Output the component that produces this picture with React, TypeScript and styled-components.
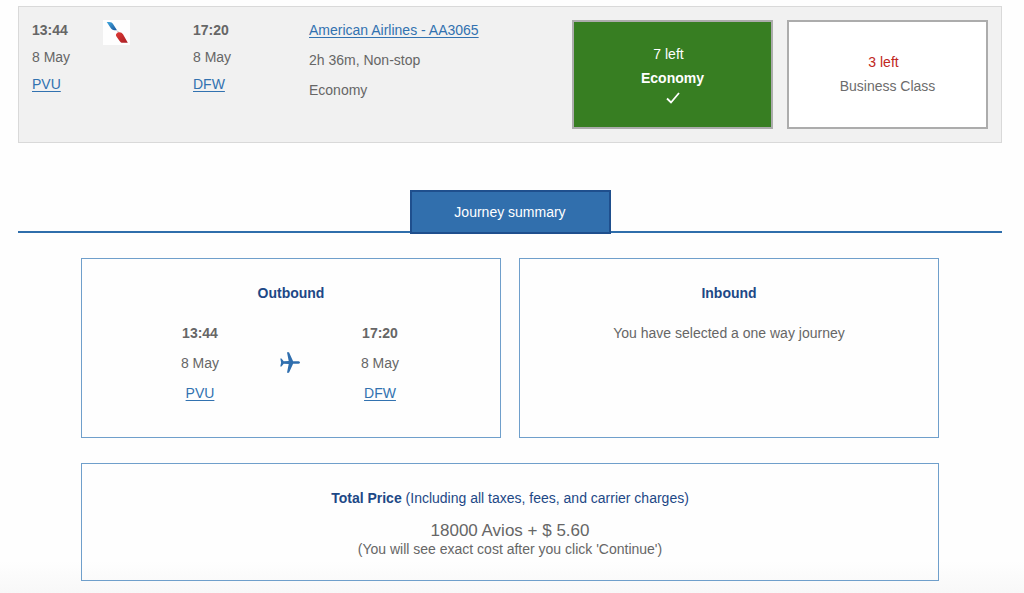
import React, { useState } from "react";
import styled, { createGlobalStyle } from "styled-components";

const GlobalStyle = createGlobalStyle`
  * { box-sizing: border-box; }
  body {
    margin: 0;
    min-height: 100vh;
    background: linear-gradient(to top, #f8f8f8, #fefefe 32px);
    color: #666;
    font-family: "Liberation Sans", Arial, Helvetica, sans-serif;
    font-size: 14px;
    line-height: 18px;
  }
  h2, h3, p { margin: 0; font-size: inherit; font-weight: inherit; }
`;

const Page = styled.main`
  padding: 6px 22px 12px 18px;
`;

const FlightRow = styled.section`
  display: grid;
  grid-template-columns: 71fr 90fr 116fr 263fr 416fr;
  padding: 13px;
  border: 1px solid #d9d9d9;
  background: #f1f1f1;
`;

const Stack = styled.div<{ $gap: number; $center?: boolean }>`
  display: flex;
  flex-direction: column;
  align-items: ${(p) => (p.$center ? "center" : "flex-start")};
  gap: ${(p) => p.$gap}px;
  padding-top: 1px;
`;

const Time = styled.strong`
  font-weight: 700;
`;

const TextLink = styled.a`
  color: #3272b0;
  text-decoration: underline;
  text-underline-offset: 2px;
`;

const AirlineLogo = styled.svg`
  display: block;
  width: 27px;
  height: 25px;
`;

const Cabins = styled.div`
  display: grid;
  grid-template-columns: 1fr 1fr;
  gap: 14px;
`;

const CabinButton = styled.button<{ $selected: boolean }>`
  display: flex;
  flex-direction: column;
  align-items: center;
  justify-content: center;
  gap: 6px;
  height: 109px;
  padding: 0 0 1px;
  border: 2px solid #acacac;
  background: ${(p) => (p.$selected ? "#377e22" : "#fff")};
  color: ${(p) => (p.$selected ? "#fff" : "#6c6c6c")};
  font: inherit;
  font-weight: ${(p) => (p.$selected ? 700 : 400)};
  cursor: pointer;
`;

const SeatsLeft = styled.span<{ $low: boolean }>`
  padding-right: 8px;
  color: ${(p) => (p.$low ? "#c0271d" : "inherit")};
  font-weight: 400;
`;

const CheckMark = styled.svg`
  display: block;
  width: 14px;
  height: 10px;
  overflow: visible;
`;

const TabBar = styled.header`
  display: flex;
  justify-content: center;
  margin-top: 47px;
  border-bottom: 2px solid #2f6eab;
`;

const Tab = styled.h2`
  width: 201px;
  margin-bottom: -3px;
  padding: 11px 0;
  border: 2px solid #1f4f8d;
  background: #316fad;
  color: #fff;
  text-align: center;
`;

const Summary = styled.div`
  display: grid;
  grid-template-columns: 1fr 1fr;
  gap: 25px 18px;
  padding: 25px 63px 0;
`;

const Panel = styled.section<{ $wide?: boolean }>`
  grid-column: ${(p) => (p.$wide ? "1 / -1" : "auto")};
  min-height: ${(p) => (p.$wide ? 118 : 180)}px;
  padding: 25px 20px 22px;
  border: 1px solid #6f9fcb;
  text-align: center;
`;

const PanelTitle = styled.h3`
  color: #1d4886;
`;

const Journey = styled.div`
  display: grid;
  grid-template-columns: 1fr 20px 1fr;
  gap: 42px;
  padding: 21px 42px 0 40px;
`;

const JourneyEnd = styled(Stack)<{ $side: "start" | "end" }>`
  justify-self: ${(p) => p.$side};
  width: 76px;
`;

const PlaneIcon = styled.svg`
  align-self: center;
  width: 20px;
  height: 22px;
`;

const Message = styled.p`
  padding-top: 22px;
`;

const Price = styled.p`
  padding-top: 15px;
  font-size: 17px;
`;

const cabins = [
  { name: "Economy", seats: 7 },
  { name: "Business Class", seats: 3 },
];

function Airline() {
  return (
    <AirlineLogo viewBox="0 0 27 25" role="img" aria-label="American Airlines">
      <defs>
        <linearGradient id="aaBlue" x1="0" y1="0" x2="1" y2="1">
          <stop offset="0" stopColor="#41a9df" />
          <stop offset="1" stopColor="#1b579d" />
        </linearGradient>
        <linearGradient id="aaRed" x1="0" y1="0" x2="1" y2="1">
          <stop offset="0" stopColor="#de3a35" />
          <stop offset="1" stopColor="#a91e25" />
        </linearGradient>
      </defs>
      <rect width="27" height="25" fill="#fefefe" />
      <path d="M3.700 2H6.200c2 0 3 .8 4 2.300L14 10.200h-2.500c-2 0-3-.9-4-2.500Z" fill="url(#aaBlue)" />
      <path d="M15 12.200h1.500c1.600 0 2.500.7 3.500 2.100l4.800 8.500h-5c-1.500 0-2.300-.5-3.200-1.800l-3-4.300c-.9-1.400-.9-2.100 0-3.100Z" fill="url(#aaRed)" />
      <path d="m13.700 11 .9.700 1.500.1-1.500-1.100Z" fill="#b5b9bf" />
    </AirlineLogo>
  );
}

export default function App() {
  const [cabin, setCabin] = useState("Economy");

  return (
    <>
      <GlobalStyle />
      <Page>
        <FlightRow>
          <Stack $gap={9}>
            <Time>13:44</Time>
            <span>8 May</span>
            <TextLink href="#pvu">PVU</TextLink>
          </Stack>
          <Airline />
          <Stack $gap={9}>
            <Time>17:20</Time>
            <span>8 May</span>
            <TextLink href="#dfw">DFW</TextLink>
          </Stack>
          <Stack $gap={12}>
            <TextLink href="#aa3065">American Airlines - AA3065</TextLink>
            <span>2h 36m, Non-stop</span>
            <span>Economy</span>
          </Stack>
          <Cabins>
            {cabins.map(({ name, seats }) => (
              <CabinButton
                key={name}
                type="button"
                $selected={cabin === name}
                aria-pressed={cabin === name}
                onClick={() => setCabin(name)}
              >
                <SeatsLeft $low={seats < 5}>{seats} left</SeatsLeft>
                <span>{name}</span>
                {cabin === name && (
                  <CheckMark viewBox="0 0 14 10" aria-hidden="true">
                    <path d="m1 5.500 4 4L13 0" fill="none" stroke="#fff" strokeWidth="1.800" />
                  </CheckMark>
                )}
              </CabinButton>
            ))}
          </Cabins>
        </FlightRow>

        <TabBar>
          <Tab>Journey summary</Tab>
        </TabBar>

        <Summary>
          <Panel>
            <PanelTitle>
              <strong>Outbound</strong>
            </PanelTitle>
            <Journey>
              <JourneyEnd $gap={12} $center $side="end">
                <Time>13:44</Time>
                <span>8 May</span>
                <TextLink href="#pvu">PVU</TextLink>
              </JourneyEnd>
              <PlaneIcon viewBox="0 0 20 22" aria-hidden="true">
                <path
                  d="M20 10.500c0 .8-1 1.300-2.500 1.300h-4.400L9 20.800H7l1.700-8.800-5-.3L1.500 14.400H.3L1.100 10.500.3 6.600h1.200L3.700 9.300l5-.3L7 .2H9l4.100 9h4.400c1.500 0 2.500.5 2.500 1.300Z"
                  fill="#2f6eae"
                />
              </PlaneIcon>
              <JourneyEnd $gap={12} $center $side="start">
                <Time>17:20</Time>
                <span>8 May</span>
                <TextLink href="#dfw">DFW</TextLink>
              </JourneyEnd>
            </Journey>
          </Panel>
          <Panel>
            <PanelTitle>
              <strong>Inbound</strong>
            </PanelTitle>
            <Message>You have selected a one way journey</Message>
          </Panel>
          <Panel $wide>
            <PanelTitle>
              <strong>Total Price</strong> (Including all taxes, fees, and carrier charges)
            </PanelTitle>
            <Price>18000 Avios + $ 5.60</Price>
            <p>(You will see exact cost after you click 'Continue')</p>
          </Panel>
        </Summary>
      </Page>
    </>
  );
}
